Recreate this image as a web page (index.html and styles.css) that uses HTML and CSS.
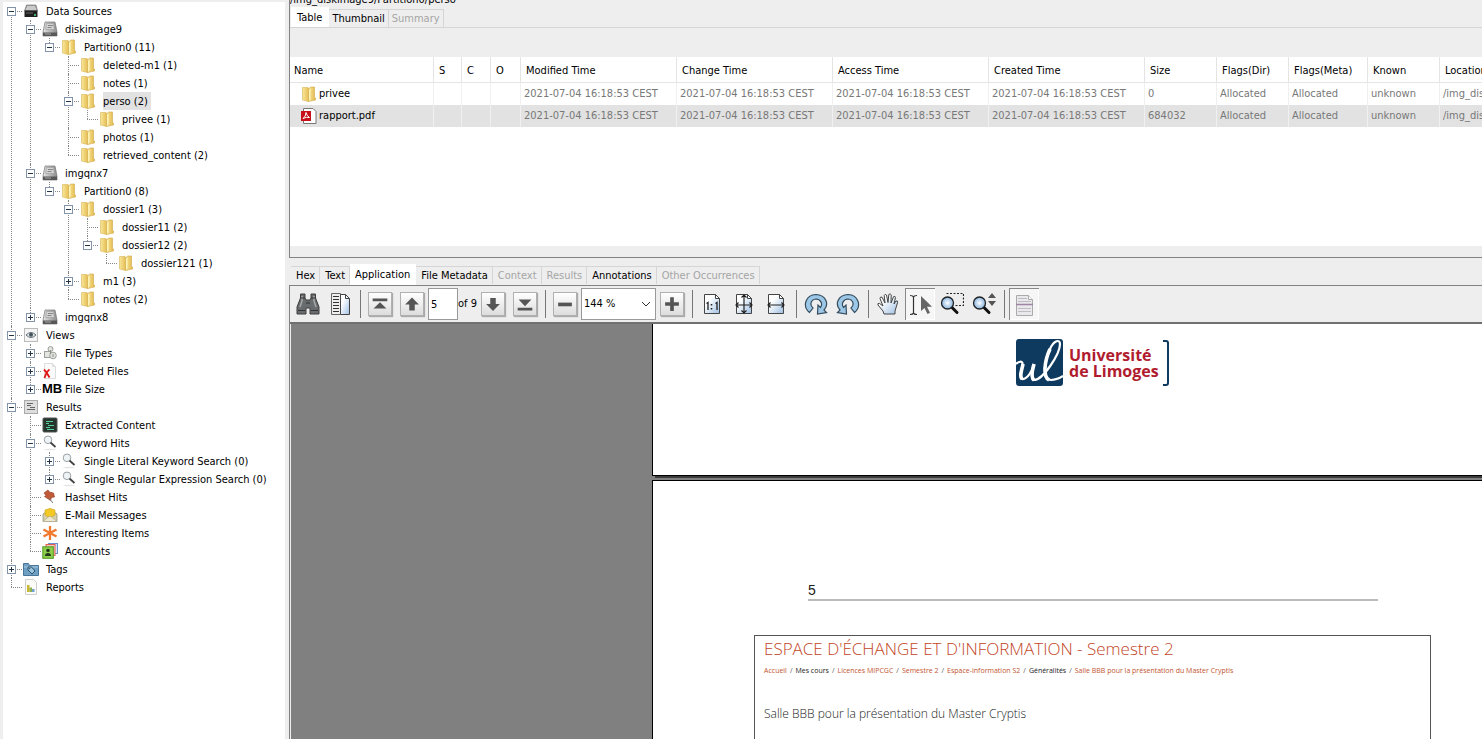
FILE: index.html
```
<!DOCTYPE html>
<html lang="en">
<head>
<meta charset="utf-8">
<title>Data Sources</title>
<link rel="stylesheet" href="styles.css">
</head>
<body>
<svg class="defs" aria-hidden="true">
  <defs>
    <linearGradient id="gold" x1="0" x2="1"><stop offset="0" stop-color="#f9e79a"/><stop offset="1" stop-color="#e2b84a"/></linearGradient>
    <linearGradient id="steel" x1="0" x2="1"><stop offset="0" stop-color="#e2e2e2"/><stop offset="1" stop-color="#8d8d8d"/></linearGradient>
    <linearGradient id="paper" x1="0" y1="0" x2="1" y2="1"><stop offset=".3" stop-color="#fff"/><stop offset="1" stop-color="#9fc0e4"/></linearGradient>
    <radialGradient id="lens"><stop offset="0" stop-color="#fff"/><stop offset="1" stop-color="#86b4e0"/></radialGradient>
    <symbol id="folder" viewBox="0 0 16 16"><path d="M1.500 1.500h5.500l1.500 1.500v12l-1 .5-6-1.500z" fill="url(#gold)" stroke="#d8b659" stroke-width=".6"/><path d="M7.500 3.500 9.500 1h4v10.500l1 .5v2l-7 1.500z" fill="url(#gold)" stroke="#d0aa4c" stroke-width=".6"/><path d="M9.500 2v11l-1.500 2V4z" fill="#fff3b8"/></symbol>
    <symbol id="disk" viewBox="0 0 16 16"><path d="M3 1h10l2 10v4H1v-4z" fill="url(#steel)" stroke="#777" stroke-width=".7"/><path d="M4.500 2.500h7l.8 6h-8.600z" fill="#d4d4d4" stroke="#999" stroke-width=".6"/><path d="M1 11.500h14V15H1z" fill="#575757"/><path d="M3 13h6" stroke="#aaa"/><path d="M6 4.500h5M5.500 6.500h4" stroke="#858585"/></symbol>
    <symbol id="drive" viewBox="0 0 16 16"><path d="M3.500 2h9.500l1.500 6h-13z" fill="#a6a6a6" stroke="#666" stroke-width=".6"/><path d="M4 4h8M3 6h10" stroke="#eee"/><path d="M1.500 7.500h13V14h-13z" fill="#202020"/><path d="M3 10h7" stroke="#666"/><path d="M11 12h2" stroke="#4de08a" stroke-width="1.500"/></symbol>
    <symbol id="eye" viewBox="0 0 16 16"><rect x="1.500" y="1.500" width="13" height="13" fill="#f4f4f4" stroke="#bbb"/><path d="M3 8q5-5 10 0-5 5-10 0z" fill="#dfe7ea" stroke="#667078"/><circle cx="8" cy="7.800" r="2" fill="#45545c"/></symbol>
    <symbol id="types" viewBox="0 0 16 16"><g fill="#e3e6e0" stroke="#9b9f98"><rect x="2.500" y="6.500" width="6" height="6"/><circle cx="8.500" cy="4" r="2.500"/><circle cx="11" cy="10.500" r="3.300"/></g><path d="M11 9v3M8.500 5v4" stroke="#8a8e87"/></symbol>
    <symbol id="deleted" viewBox="0 0 16 16"><path d="M2.500.5h8l3 3v12h-11z" fill="#fafafa" stroke="#ddd"/><path d="M10.500.5v3h3" fill="#e8e8e8" stroke="#ddd"/><path d="M2 6.500q3 3 5.500 8M7.500 6.500q-3 2-5 8.500" stroke="#e01818" stroke-width="1.800" fill="none"/></symbol>
    <symbol id="results" viewBox="0 0 16 16"><rect x="1.500" y="1.500" width="13" height="13" fill="#dedede" stroke="#aaa"/><path d="M4 4.500h6M4 6.500h4M7 8.500h5M4 10.500h8" stroke="#666"/></symbol>
    <symbol id="extract" viewBox="0 0 16 16"><rect x="1" y="1" width="14" height="14" rx="1" fill="#26332f" stroke="#555"/><path d="M4 4.500h7M4 6.500h3M6 8.500h6M4 10.500h4M5 12.500h7" stroke="#56cf98"/></symbol>
    <symbol id="search" viewBox="0 0 16 16"><ellipse cx="8" cy="14.500" rx="6" ry=".7" fill="#e5e5e5"/><circle cx="6" cy="4.800" r="3.800" fill="#eef4f6" stroke="#9aa1a5"/><path d="M8.500 7.500l5 4.500" stroke="#444" stroke-width="1.800"/></symbol>
    <symbol id="pin" viewBox="0 0 16 16"><path d="M2 4l4-3 1.500 2 4 1 1 4-3 .5-1 3L2.500 7.500l1.500-1z" fill="#c15a38" stroke="#8c3a20" stroke-width=".6"/><path d="M7 9l4 5" stroke="#777"/></symbol>
    <symbol id="mail" viewBox="0 0 16 16"><path d="M1 7l7-5 7 5v7.500H1z" fill="#d7cfae" stroke="#8e8a72" stroke-width=".7"/><path d="M3 3q5-3 10 0v5l-5 3-5-3z" fill="#f2c925" stroke="#d0a31b" stroke-width=".6"/><path d="M1 14.500l6-5h2l6 5z" fill="#eee8cf" stroke="#aaa58c" stroke-width=".6"/></symbol>
    <symbol id="star" viewBox="0 0 16 16"><path d="M8 1v14M1.500 4.500l13 7M14.500 4.500l-13 7" stroke="#f07a2e" stroke-width="2.300"/></symbol>
    <symbol id="accounts" viewBox="0 0 16 16"><rect x="6.500" y=".5" width="9" height="10" fill="#d5e2f5" stroke="#6a8fd0"/><rect x="4" y="1.500" width="9" height="11" fill="#f6c8c0" stroke="#e06050"/><rect x=".8" y="3.800" width="10.500" height="11.500" fill="#8ccf4b" stroke="#4f9a20"/><circle cx="6" cy="7.500" r="1.800" fill="#23381a"/><path d="M3 13q0-3 3-3t3 3z" fill="#23381a"/></symbol>
    <symbol id="tags" viewBox="0 0 16 16"><path d="M.5 2.500h5l1 2h9v10H.5z" fill="#6e9fc4" stroke="#4b7596"/><path d="M1 6h14" stroke="#a9cae2"/><path d="M5 6h3.500l3.500 4-3 3L5 9z" fill="#9cc4df" stroke="#23465f" stroke-width=".9"/><circle cx="6.600" cy="7.600" r=".7" fill="#23465f"/></symbol>
    <symbol id="report" viewBox="0 0 16 16"><path d="M2.500.5h8l3 3v12h-11z" fill="#fbfbf8" stroke="#d0d0d0"/><path d="M4 6h2.500v7H4z" fill="#c9b733"/><path d="M6.500 8.500H9V13H6.500z" fill="#8fb04c"/><path d="M9 10h2.500v3H9z" fill="#6fa1d0"/></symbol>
    <symbol id="pdf" viewBox="0 0 16 16"><path d="M2.500.5h9.500l3 3v12H2.500z" fill="#fff" stroke="#777"/><path d="M0 3h10v10H0z" fill="#c6111b"/><path d="M2 10.500q3-2 3-6 .5 3 3.500 5-3-.8-6.500 1z" fill="none" stroke="#fff"/></symbol>
    <symbol id="sheet" viewBox="0 0 24 24"><path d="M4.500 2.500h11l4 4v15h-15z" fill="url(#paper)" stroke="#444"/><path d="M15.500 2.500v4h4z" fill="#fff" stroke="#444"/></symbol>
    <symbol id="rotate" viewBox="0 0 24 24"><path d="M5.500 20.500C-2 14 1.500 3 12 2.500 22 3 25.500 12 20 18l2.500 2.500-9 1.500.5-9 2.500 2.500C19 12 17 7.500 12 7 6.500 7.500 5.500 13 9 16z" fill="#9cc7e6" stroke="#344c5e" stroke-width="1.200"/></symbol>
    <symbol id="glass" viewBox="0 0 24 24"><path d="M12 15.500l5 5" stroke="#111" stroke-width="3" stroke-linecap="round"/><circle cx="7.500" cy="11" r="6" fill="url(#lens)" stroke="#222" stroke-width="1.300"/></symbol>
  </defs>
</svg>
<div class="app">
  <nav class="tree" aria-label="Data tree">
    <ul class="root">
      <li><div class="row"><button class="ex" aria-label="Collapse"></button><svg class="ic"><use href="#drive"/></svg><span>Data Sources</span></div>
        <ul>
          <li><div class="row"><button class="ex" aria-label="Collapse"></button><svg class="ic"><use href="#disk"/></svg><span>diskimage9</span></div>
            <ul>
              <li><div class="row"><button class="ex" aria-label="Collapse"></button><svg class="ic"><use href="#folder"/></svg><span>Partition0 (11)</span></div>
                <ul>
                  <li><div class="row leaf"><svg class="ic"><use href="#folder"/></svg><span>deleted-m1 (1)</span></div></li>
                  <li><div class="row leaf"><svg class="ic"><use href="#folder"/></svg><span>notes (1)</span></div></li>
                  <li><div class="row"><button class="ex" aria-label="Collapse"></button><svg class="ic"><use href="#folder"/></svg><span class="selected">perso (2)</span></div>
                    <ul>
                      <li><div class="row leaf"><svg class="ic"><use href="#folder"/></svg><span>privee (1)</span></div></li>
                    </ul>
                  </li>
                  <li><div class="row leaf"><svg class="ic"><use href="#folder"/></svg><span>photos (1)</span></div></li>
                  <li><div class="row leaf"><svg class="ic"><use href="#folder"/></svg><span>retrieved_content (2)</span></div></li>
                </ul>
              </li>
            </ul>
          </li>
          <li><div class="row"><button class="ex" aria-label="Collapse"></button><svg class="ic"><use href="#disk"/></svg><span>imgqnx7</span></div>
            <ul>
              <li><div class="row"><button class="ex" aria-label="Collapse"></button><svg class="ic"><use href="#folder"/></svg><span>Partition0 (8)</span></div>
                <ul>
                  <li><div class="row"><button class="ex" aria-label="Collapse"></button><svg class="ic"><use href="#folder"/></svg><span>dossier1 (3)</span></div>
                    <ul>
                      <li><div class="row leaf"><svg class="ic"><use href="#folder"/></svg><span>dossier11 (2)</span></div></li>
                      <li><div class="row"><button class="ex" aria-label="Collapse"></button><svg class="ic"><use href="#folder"/></svg><span>dossier12 (2)</span></div>
                        <ul>
                          <li><div class="row leaf"><svg class="ic"><use href="#folder"/></svg><span>dossier121 (1)</span></div></li>
                        </ul>
                      </li>
                    </ul>
                  </li>
                  <li><div class="row"><button class="ex plus" aria-label="Expand"></button><svg class="ic"><use href="#folder"/></svg><span>m1 (3)</span></div></li>
                  <li><div class="row leaf"><svg class="ic"><use href="#folder"/></svg><span>notes (2)</span></div></li>
                </ul>
              </li>
            </ul>
          </li>
          <li><div class="row"><button class="ex plus" aria-label="Expand"></button><svg class="ic"><use href="#disk"/></svg><span>imgqnx8</span></div></li>
        </ul>
      </li>
      <li><div class="row"><button class="ex" aria-label="Collapse"></button><svg class="ic"><use href="#eye"/></svg><span>Views</span></div>
        <ul>
          <li><div class="row"><button class="ex plus" aria-label="Expand"></button><svg class="ic"><use href="#types"/></svg><span>File Types</span></div></li>
          <li><div class="row"><button class="ex plus" aria-label="Expand"></button><svg class="ic"><use href="#deleted"/></svg><span>Deleted Files</span></div></li>
          <li><div class="row"><button class="ex plus" aria-label="Expand"></button><b class="mb">MB</b><span>File Size</span></div></li>
        </ul>
      </li>
      <li><div class="row"><button class="ex" aria-label="Collapse"></button><svg class="ic"><use href="#results"/></svg><span>Results</span></div>
        <ul>
          <li><div class="row leaf"><svg class="ic"><use href="#extract"/></svg><span>Extracted Content</span></div></li>
          <li><div class="row"><button class="ex" aria-label="Collapse"></button><svg class="ic"><use href="#search"/></svg><span>Keyword Hits</span></div>
            <ul>
              <li><div class="row"><button class="ex plus" aria-label="Expand"></button><svg class="ic"><use href="#search"/></svg><span>Single Literal Keyword Search (0)</span></div></li>
              <li><div class="row"><button class="ex plus" aria-label="Expand"></button><svg class="ic"><use href="#search"/></svg><span>Single Regular Expression Search (0)</span></div></li>
            </ul>
          </li>
          <li><div class="row leaf"><svg class="ic"><use href="#pin"/></svg><span>Hashset Hits</span></div></li>
          <li><div class="row leaf"><svg class="ic"><use href="#mail"/></svg><span>E-Mail Messages</span></div></li>
          <li><div class="row leaf"><svg class="ic"><use href="#star"/></svg><span>Interesting Items</span></div></li>
          <li><div class="row leaf"><svg class="ic"><use href="#accounts"/></svg><span>Accounts</span></div></li>
        </ul>
      </li>
      <li><div class="row"><button class="ex plus" aria-label="Expand"></button><svg class="ic"><use href="#tags"/></svg><span>Tags</span></div></li>
      <li><div class="row leaf"><svg class="ic"><use href="#report"/></svg><span>Reports</span></div></li>
    </ul>
  </nav>
  <main class="main">
    <section class="listing">
      <div class="path">/img_diskimage9/Partition0/perso</div>
      <div class="tabs">
        <button class="on">Table</button><button>Thumbnail</button><button disabled>Summary</button>
      </div>
      <div class="sheet-area">
        <table>
          <colgroup><col class="c-name"><col class="c-s"><col class="c-c"><col class="c-o"><col class="c-time"><col class="c-time"><col class="c-time"><col class="c-time"><col class="c-72"><col class="c-72"><col class="c-known"><col class="c-72"><col></colgroup>
          <thead><tr><th>Name</th><th>S</th><th>C</th><th>O</th><th>Modified Time</th><th>Change Time</th><th>Access Time</th><th>Created Time</th><th>Size</th><th>Flags(Dir)</th><th>Flags(Meta)</th><th>Known</th><th>Location</th></tr></thead>
          <tbody>
            <tr><td><div class="file"><svg class="ic"><use href="#folder"/></svg>privee</div></td><td></td><td></td><td></td><td>2021-07-04 16:18:53 CEST</td><td>2021-07-04 16:18:53 CEST</td><td>2021-07-04 16:18:53 CEST</td><td>2021-07-04 16:18:53 CEST</td><td>0</td><td>Allocated</td><td>Allocated</td><td>unknown</td><td>/img_diskimage9</td></tr>
            <tr class="picked"><td><div class="file"><svg class="ic"><use href="#pdf"/></svg>rapport.pdf</div></td><td></td><td></td><td></td><td>2021-07-04 16:18:53 CEST</td><td>2021-07-04 16:18:53 CEST</td><td>2021-07-04 16:18:53 CEST</td><td>2021-07-04 16:18:53 CEST</td><td>684032</td><td>Allocated</td><td>Allocated</td><td>unknown</td><td>/img_diskimage9</td></tr>
          </tbody>
        </table>
      </div>
    </section>
    <div class="tabs lower">
      <button>Hex</button><button>Text</button><button class="on">Application</button><button>File Metadata</button><button disabled>Context</button><button disabled>Results</button><button>Annotations</button><button disabled>Other Occurrences</button>
    </div>
    <section class="viewer">
      <div class="toolbar">
        <button class="tool" aria-label="Find"><svg viewBox="0 0 24 24"><path d="M4.500 2h4.500v4l1 2h4l1-2V2h4.500v4l3.500 9v7h-9v-6h-4v6H1v-7l3.500-9z" fill="#686c6e" stroke="#3c3c3c"/><path d="M6 4v5L4 15M18 4v5l2 6" stroke="#a5a9ab" stroke-width="1.500" fill="none"/><path d="M2 18.500h7M15 18.500h7M10 11h4M4 6h5M15 6h5" stroke="#333"/></svg></button>
        <button class="tool" aria-label="Side panel"><svg viewBox="0 0 24 24"><path d="M3.500 1.500h9v21h-9z" fill="#eee" stroke="#666"/><path d="M5 4.500h6M5 7.500h6M5 10.500h6M5 13.500h6M5 16.500h6M5 19.500h6" stroke="#333"/><path d="M12.500 2.500h5l4 4v16h-9z" fill="url(#paper)" stroke="#444"/><path d="M17.500 2.500v4h4" fill="none" stroke="#444"/></svg></button>
        <i class="sep"></i>
        <button class="tool face" aria-label="First page"><svg viewBox="0 0 24 24"><path d="M4 6h16v3H4zM12 10l7 7H5z" fill="#555"/></svg></button>
        <button class="tool face" aria-label="Previous page"><svg viewBox="0 0 24 24"><path d="M12 5l7.500 7.500H15V19H9v-6.500H4.500z" fill="#555"/></svg></button>
        <input class="page-no" id="page-no" value="5"><label class="of" for="page-no">of 9</label>
        <button class="tool face" aria-label="Next page"><svg viewBox="0 0 24 24"><path d="M12 19.500L4.500 12H9V5.500h6V12h4.500z" fill="#555"/></svg></button>
        <button class="tool face" aria-label="Last page"><svg viewBox="0 0 24 24"><path d="M4 16h16v3H4zM12 14.500L5 7h14z" fill="#555"/></svg></button>
        <i class="sep"></i>
        <button class="tool face" aria-label="Zoom out"><svg viewBox="0 0 24 24"><path d="M4.500 10.500h15v4h-15z" fill="#555"/></svg></button>
        <div class="combo"><select aria-label="Zoom level"><option>144 %</option></select><svg viewBox="0 0 10 6"><path d="M1 1l4 4 4-4" fill="none" stroke="#333"/></svg></div>
        <button class="tool face" aria-label="Zoom in"><svg viewBox="0 0 24 24"><path d="M10 4.500h4V10h5.500v4H14v5.500h-4V14H4.500v-4H10z" fill="#555"/></svg></button>
        <i class="sep"></i>
        <button class="tool" aria-label="Actual size"><svg viewBox="0 0 24 24"><use href="#sheet"/><path d="M6.500 11.500l1.500-1V18M15.500 11.500l1.500-1V18" stroke="#222" stroke-width="1.300" fill="none"/><path d="M11.500 12v1.600M11.500 16v1.600" stroke="#222" stroke-width="1.600"/></svg></button>
        <button class="tool" aria-label="Fit page"><svg viewBox="0 0 24 24"><use href="#sheet"/><path d="M12 3v18M5 13h14M9.500 5.500L12 3l2.500 2.500M9.500 18.500L12 21l2.500-2.500M6.500 10.500L4 13l2.500 2.500M17.500 10.500L20 13l-2.500 2.500" fill="none" stroke="#222" stroke-width="1.200"/></svg></button>
        <button class="tool" aria-label="Fit width"><svg viewBox="0 0 24 24"><use href="#sheet"/><path d="M5 13h14M6.500 10.500L4 13l2.500 2.500M17.500 10.500L20 13l-2.500 2.500" fill="none" stroke="#222" stroke-width="1.200"/></svg></button>
        <i class="sep"></i>
        <button class="tool" aria-label="Rotate right"><svg viewBox="0 0 24 24"><use href="#rotate"/></svg></button>
        <button class="tool" aria-label="Rotate left"><svg viewBox="0 0 24 24"><use href="#rotate" transform="translate(24 0) scale(-1 1)"/></svg></button>
        <i class="sep"></i>
        <button class="tool" aria-label="Pan"><svg viewBox="0 0 24 24"><path d="M8 22l-1-3-5-6q-.8-2 1.500-1.600L7 14 4 6.500q0-2 2-1.300L9 11 8.200 3.500q.8-2 2.300-.5l1.500 7.500.8-8q1.500-1.500 2.400.3L15 11l2.500-6.300q1.800-1 2 .8L18 12l2-3q2-.7 1.600 1.500L19 19v3z" fill="url(#paper)" stroke="#444"/></svg></button>
        <button class="tool down" aria-label="Select text"><svg viewBox="0 0 24 24"><path d="M1 2.500q3 0 3.500 1.500Q5 2.500 8 2.500M4.500 4v16M1 21.500q3 0 3.500-1.500.5 1.500 3.500 1.500" fill="none" stroke="#333" stroke-width="1.200"/><path d="M12 3v15l3.500-3 3 6 2.500-1.200-3-6h5z" fill="#666"/></svg></button>
        <button class="tool" aria-label="Zoom area"><svg viewBox="0 0 24 24"><path d="M6.500 1.500h17v12h-8" fill="none" stroke="#222" stroke-dasharray="2 1.500" stroke-width="1.200"/><use href="#glass"/></svg></button>
        <button class="tool" aria-label="Zoom dynamic"><svg viewBox="0 0 24 24"><use href="#glass"/><path d="M20 1l4 5h-8zM20 14l4-5h-8z" fill="#555"/></svg></button>
        <i class="sep"></i>
        <button class="tool down" aria-label="Continuous pages"><svg viewBox="0 0 24 24"><path d="M3.500 2.500h12l4 4v16h-16z" fill="#e9e8eb" stroke="#aaa"/><path d="M15.500 2.500v4h4" fill="#fff" stroke="#aaa"/><path d="M5 5.500h9M5 8.500h13M5 15.500h13M5 18.500h13" stroke="#c0bcc4"/><path d="M3 11.500h17" stroke="#9d85a6" stroke-width="1.500"/></svg></button>
      </div>
      <div class="canvas">
        <article class="page first">
          <div class="logo">
            <svg class="mark" viewBox="0 0 47 47"><rect width="47" height="47" rx="3" fill="#0f3a5f"/><path d="M0 25q5-4 6.500-1C7 27 2.500 38 6 40c5 1 11-9 12-15-1 6-4 15 0 16C27 41 44 15 44 5c0-5-6-4-10 5C29 20 25 41 35 41q6 0 12-4" fill="none" stroke="#fff" stroke-width="2.200"/><path d="M7 25C6 31 3 37 6 40M18 25c-2 7-3 14 0 16M34 10C28 23 27 38 33 41" fill="none" stroke="#fff" stroke-width="3.600"/></svg>
            <p>Université<br>de Limoges</p>
            <svg class="bracket" viewBox="0 0 6 46"><path d="M0 1h3q2 0 2 2v40q0 2-2 2H0" fill="none" stroke="#0f3a5f" stroke-width="2"/></svg>
          </div>
        </article>
        <article class="page second">
          <header>5</header>
          <div class="frame">
            <h1>ESPACE D'ÉCHANGE ET D'INFORMATION - Semestre 2</h1>
            <p class="crumbs"><a href="#">Accueil</a><i>/</i><b>Mes cours</b><i>/</i><a href="#">Licences MIPCGC</a><i>/</i><a href="#">Semestre 2</a><i>/</i><a href="#">Espace-information S2</a><i>/</i><b>Généralités</b><i>/</i><a href="#">Salle BBB pour la présentation du Master Cryptis</a></p>
            <h2>Salle BBB pour la présentation du Master Cryptis</h2>
          </div>
        </article>
      </div>
    </section>
  </main>
</div>
</body>
</html>
```
FILE: styles.css
```
* { box-sizing: border-box; }
html, body { height: 100%; }
body {
  margin: 0;
  overflow: hidden;
  background: #eee;
  color: #000;
  font: 11px/18px "DejaVu Sans Condensed", "DejaVu Sans", sans-serif;
  white-space: nowrap;
}
button, input, select { font: inherit; color: inherit; margin: 0; padding: 0; border-radius: 0; }
ul { list-style: none; margin: 0; padding: 0; }
svg { display: block; }
.defs { position: absolute; width: 0; height: 0; }
.ic { width: 16px; height: 16px; flex: none; }

.app { display: grid; grid-template-columns: 289px 1fr; height: 100%; }

/* Tree */
.tree { background: #fff; border: solid #eee; border-width: 2px 4px 0 3px; overflow: hidden; }
.tree li { position: relative; }
.tree li::before {
  content: "";
  position: absolute;
  left: 8px;
  top: 0;
  bottom: 0;
  border-left: 1px dotted #888;
}
.tree li:last-child::before { bottom: auto; height: 9px; }
.root > li:first-child::before { top: 9px; }
.tree ul ul { margin-left: 19px; }
.row { position: relative; display: flex; align-items: center; height: 18px; padding-left: 20px; }
.row::before {
  content: "";
  position: absolute;
  left: 8px;
  top: 9px;
  width: 11px;
  border-top: 1px dotted #888;
}
.row > span { height: 18px; margin-left: 7px; padding-right: 3px; line-height: 19px; }
.row .selected { background: #e2e2e2; }
.ex {
  position: absolute;
  left: 4px;
  top: 5px;
  width: 9px;
  height: 9px;
  border: 1px solid #8394a8;
  background: linear-gradient(#234, #234) center / 5px 1px no-repeat, #fff;
}
.ex.plus { background: linear-gradient(#234, #234) center / 5px 1px no-repeat, linear-gradient(#234, #234) center / 1px 5px no-repeat, #fff; }
.mb { width: 16px; font: bold 13px/18px "Liberation Sans", Arial, sans-serif; }

/* Listing */
.main { display: flex; flex-direction: column; min-width: 0; min-height: 0; }
.listing { flex: none; height: 258px; border: solid #828282; border-width: 0 0 1px 1px; overflow: hidden; }
.path { height: 8px; display: flex; align-items: flex-end; line-height: 16px; }
.tabs { display: flex; flex: none; align-items: flex-end; height: 20px; padding-left: 1px; border-bottom: 1px solid #d5d5d5; }
.tabs button {
  height: 18px;
  padding: 0 3px;
  border: 1px solid #d5d5d5;
  border-width: 1px 1px 0 0;
  background: #eee;
  line-height: 16px;
}
.tabs .on { height: 20px; padding: 0 6px; background: #fff; border-color: #fff; }
.tabs button:disabled { color: #a5a5a5; }
.sheet-area { height: 189px; margin-top: 29px; overflow: hidden; background: #fff; }
table { table-layout: fixed; width: 1230px; border-collapse: separate; border-spacing: 0; }
.c-name { width: 144px; } .c-s { width: 28px; } .c-c { width: 29px; } .c-o { width: 30px; }
.c-time { width: 156px; } .c-72 { width: 72px; } .c-known { width: 79px; }
th { height: 26px; padding: 3px 0 0 5px; border: solid #e4e4e4; border-width: 0 1px 1px 0; font-weight: normal; text-align: left; }
th:first-child { padding-left: 4px; }
td { height: 22px; padding: 0 0 0 3px; border-right: 1px solid #f0f0f0; color: #787878; overflow: hidden; }
td:first-child { color: #000; padding-left: 11px; }
.picked { background: #e2e2e2; }
.file { display: flex; align-items: center; gap: 2px; }

/* Content viewer */
.tabs.lower { height: 21px; margin: 6px 0 0 1px; border-bottom: 0; }
.lower button { padding: 0 4px 0 5px; margin-bottom: 1px; }
.lower button.on { height: 21px; padding: 0 5px; margin-bottom: 0; }
.viewer { flex: 1; display: flex; flex-direction: column; min-height: 0; border: solid #828282; border-width: 1px 0 0 1px; }
.toolbar { display: flex; flex: none; align-items: center; height: 38px; padding-left: 2px; border-bottom: 2px solid #707070; }
.tool { display: flex; align-items: center; justify-content: center; width: 32px; height: 32px; border: 0; background: none; flex: none; }
.tool svg { width: 24px; height: 24px; }
.face svg { border: 1px solid #b0b0b0; background: linear-gradient(#fff, #ddd); box-shadow: 1px 1px 1px #aaa; }
.down { width: 30px; margin: 0 1px; border: solid #888; border-width: 1px 0 0 1px; background: #f6f6f6; box-shadow: inset -1px -1px #fff; }
.sep { width: 8px; height: 28px; flex: none; background: linear-gradient(#777, #777) center / 1px 100% no-repeat; }
.page-no { width: 30px; height: 32px; padding: 0 2px; border: 1px solid #999; background: #fff; }
.of { width: 19px; }
.combo { position: relative; width: 75px; height: 32px; }
.combo select { width: 100%; height: 100%; padding-left: 2px; border: 1px solid #999; background: #fff; appearance: none; }
.combo svg { position: absolute; right: 5px; top: 13px; width: 10px; height: 6px; pointer-events: none; }

.canvas { flex: 1; display: flex; flex-direction: column; min-height: 0; overflow: hidden; margin-left: 1px; padding-left: 361px; background: #808080; }
.page { background: #fff; border: solid #000; border-width: 0 0 0 1px; color: #222; }
.first { flex: none; height: 152px; border-bottom: 1px solid #000; box-shadow: 3px 2px #3c3c3c; padding: 15px 0 0 363px; }
.logo { display: flex; align-items: center; }
.mark { width: 47px; height: 47px; margin-right: 6px; }
.logo p { margin: 0; width: 92px; font: bold 16px/16px "Open Sans", sans-serif; color: #b01c2e; }
.bracket { width: 6px; height: 46px; margin-left: 2px; }
.second { flex: 1; display: flex; flex-direction: column; min-height: 0; margin-top: 4px; border-top: 1px solid #000; padding: 100px 51px 0 101px; }
.second header { flex: none; width: 570px; margin-left: 54px; border-bottom: 2px solid #bbb; font: 14px/18px "Liberation Sans", Arial, sans-serif; }
.frame { flex: 1; width: 677px; min-height: 0; margin-top: 34px; padding: 0 9px; border: solid #555; border-width: 1px 1px 0; }
.frame h1 { margin: 0; font: 300 17px/25px "Open Sans", sans-serif; color: #c2451f; }
.crumbs { display: flex; gap: 3px; margin: 4px 0 0; font: 7px/12px "Open Sans", sans-serif; color: #555; }
.crumbs a { color: #c2542f; text-decoration: none; }
.crumbs b { font-weight: normal; color: #222; }
.crumbs i { font-style: normal; }
.frame h2 { margin: 27px 0 0; font: 300 12px/20px "Open Sans", sans-serif; color: #222; }
```
